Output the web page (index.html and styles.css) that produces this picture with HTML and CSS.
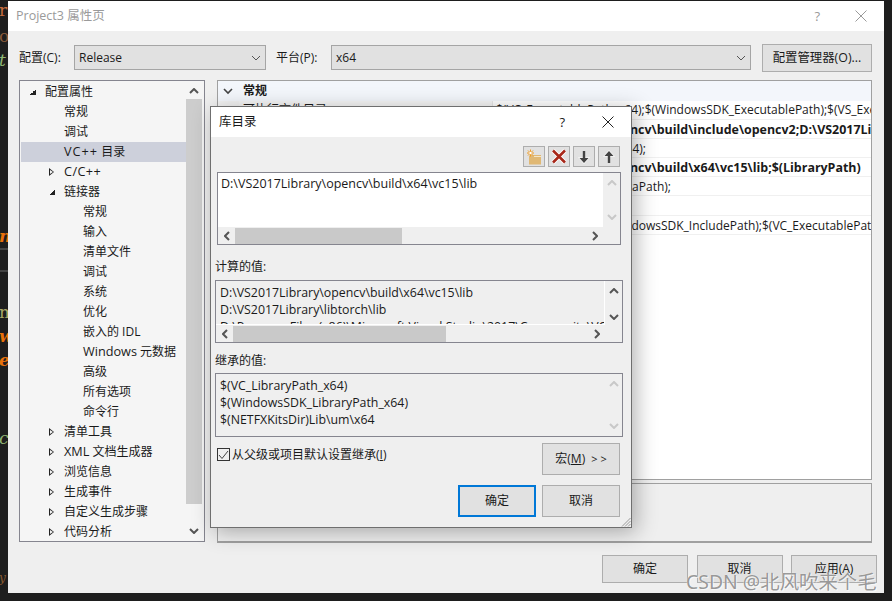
FILE: index.html
```html
<!DOCTYPE html>
<html lang="zh-CN">
<head>
<meta charset="utf-8">
<title>Project3 属性页</title>
<link rel="stylesheet" href="styles.css">
</head>
<body>
<div class="backdrop">
  <span class="bl up o" style="top:0">r</span>
  <span class="bl up o2" style="top:26px">o</span>
  <span class="bl g" style="top:50px">t</span>
  <span class="bl o3" style="top:226px">n</span>
  <span class="bl up y" style="top:302px">m</span>
  <span class="bl o3" style="top:326px">w</span>
  <span class="bl o3" style="top:350px">e</span>
  <span class="bl g" style="top:428px">c</span>
  <span class="bl small" style="top:568px">y</span>
  <i class="rule" style="top:248px"></i>
  <i class="rule" style="top:270px"></i>
</div>

<section class="win main">
  <header class="title">
    <span class="title-text dim">Project3 属性页</span>
    <span class="title-btns dim">
      <span class="help">?</span>
      <svg width="14" height="14" viewBox="0 0 14 14"><path d="M1.500 1.500l11 11M12.500 1.500l-11 11" stroke="currentColor" fill="none"/></svg>
    </span>
  </header>
  <div class="main-body">
    <div class="cfg-row">
      <span class="cfg-label">配置(C):</span>
      <div class="combo c1"><span>Release</span><svg width="10" height="6" viewBox="0 0 10 6"><path d="M1 1l4 4 4-4" stroke="#555" fill="none"/></svg></div>
      <span class="cfg-label l2">平台(P):</span>
      <div class="combo c2"><span>x64</span><svg width="10" height="6" viewBox="0 0 10 6"><path d="M1 1l4 4 4-4" stroke="#555" fill="none"/></svg></div>
      <button class="btn mgr">配置管理器(O)...</button>
    </div>
    <div class="panes">
      <div class="tree-box">
        <ul class="tree">
          <li class="lv0"><i class="tw open"></i>配置属性</li>
          <li class="lv1">常规</li>
          <li class="lv1">调试</li>
          <li class="lv1 sel"><span class="lat plus">VC++</span> 目录</li>
          <li class="lv1"><i class="tw"></i><span class="lat plus2">C/C++</span></li>
          <li class="lv1"><i class="tw open"></i>链接器</li>
          <li class="lv2">常规</li>
          <li class="lv2">输入</li>
          <li class="lv2">清单文件</li>
          <li class="lv2">调试</li>
          <li class="lv2">系统</li>
          <li class="lv2">优化</li>
          <li class="lv2">嵌入的 IDL</li>
          <li class="lv2"><span class="lat">Windows</span> 元数据</li>
          <li class="lv2">高级</li>
          <li class="lv2">所有选项</li>
          <li class="lv2">命令行</li>
          <li class="lv1"><i class="tw"></i>清单工具</li>
          <li class="lv1"><i class="tw"></i><span class="lat">XML</span> 文档生成器</li>
          <li class="lv1"><i class="tw"></i>浏览信息</li>
          <li class="lv1"><i class="tw"></i>生成事件</li>
          <li class="lv1"><i class="tw"></i>自定义生成步骤</li>
          <li class="lv1"><i class="tw"></i>代码分析</li>
        </ul>
        <div class="vbar">
          <svg class="ar" width="10" height="6" viewBox="0 0 10 6"><path d="M1 5l4-4 4 4" stroke="#555" stroke-width="2" fill="none"/></svg>
          <div class="vtrack"><div class="vthumb"></div></div>
          <svg class="ar" width="10" height="6" viewBox="0 0 10 6"><path d="M1 1l4 4 4-4" stroke="#555" stroke-width="2" fill="none"/></svg>
        </div>
      </div>
      <div class="right">
        <div class="grid">
          <div class="grid-head"><svg width="10" height="7" viewBox="0 0 10 7"><path d="M1 1l4 4 4-4" stroke="#444" stroke-width="1.600" fill="none"/></svg><b>常规</b></div>
          <div class="grid-row first-row"><span class="key">可执行文件目录</span><span class="val">$(VC_ExecutablePath_x64);$(WindowsSDK_ExecutablePath);$(VS_ExecutablePath)</span></div>
          <div class="grid-row bold"><span class="val">D:\VS2017Library\opencv\build\include\opencv2;D:\VS2017Library</span></div>
          <div class="grid-row"><span class="val">$(VC_ReferencesPath_x64);</span></div>
          <div class="grid-row bold"><span class="val">D:\VS2017Library\opencv\build\x64\vc15\lib;$(LibraryPath)</span></div>
          <div class="grid-row"><span class="val">$(WindowsSDK_MetadataPath);</span></div>
          <div class="grid-row"></div>
          <div class="grid-row"><span class="val">$(VC_IncludePath);$(WindowsSDK_IncludePath);$(VC_ExecutablePath_x64)</span></div>
        </div>
        <div class="desc"></div>
      </div>
    </div>
    <div class="foot">
      <button class="btn fb">确定</button>
      <button class="btn fb">取消</button>
      <button class="btn fb">应用(A)</button>
    </div>
  </div>
  <span class="mark">CSDN @北风吹来个毛</span>
</section>

<section class="win dlg">
  <header class="title dlg-title">
    <span class="title-text">库目录</span>
    <span class="title-btns">
      <span class="help">?</span>
      <svg width="14" height="14" viewBox="0 0 14 14"><path d="M1.500 1.500l11 11M12.500 1.500l-11 11" stroke="#222" fill="none"/></svg>
    </span>
  </header>
  <div class="dlg-body">
    <div class="tools">
      <button class="tool"><svg width="18" height="16" viewBox="0 0 18 16"><path d="M5 6h11v9.500H4V7z" fill="#e0b874"/><path d="M9 7.500h7" stroke="#f5e6c8"/><path d="M5.500 0.500v7M2 4h7M3 1.500l5 5M8 1.500l-5 5" stroke="#f09a20"/><circle cx="5.500" cy="4" r="1.200" fill="#fff"/></svg></button>
      <button class="tool"><svg width="16" height="15" viewBox="0 0 16 15"><path d="M2 1.500l12 12M14 1.500l-12 12" stroke="#fff" stroke-width="4.500"/><path d="M2 1.500l12 12M14 1.500l-12 12" stroke="#a8281a" stroke-width="2.600"/></svg></button>
      <button class="tool"><svg width="12" height="14" viewBox="0 0 12 14"><path d="M6 1v7h4.500L6 13 1.500 8H6z" fill="#444" stroke="#fff" stroke-opacity=".7" paint-order="stroke" stroke-width="1.500"/><path d="M6 1v8" stroke="#444" stroke-width="2.400"/></svg></button>
      <button class="tool"><svg width="12" height="14" viewBox="0 0 12 14"><path d="M6 13V6h4.500L6 1 1.500 6H6z" fill="#444" stroke="#fff" stroke-opacity=".7" paint-order="stroke" stroke-width="1.500"/><path d="M6 13V5" stroke="#444" stroke-width="2.400"/></svg></button>
    </div>

    <div class="list edit">
      <div class="list-main">
        <div class="list-text white">D:\VS2017Library\opencv\build\x64\vc15\lib</div>
        <div class="dvbar"><svg width="10" height="6" viewBox="0 0 10 6"><path d="M1 5l4-4 4 4" stroke="#c8c8c8" stroke-width="2" fill="none"/></svg><svg width="10" height="6" viewBox="0 0 10 6"><path d="M1 1l4 4 4-4" stroke="#c8c8c8" stroke-width="2" fill="none"/></svg></div>
      </div>
      <div class="hbar">
        <span class="harr"><svg width="6" height="10" viewBox="0 0 6 10"><path d="M5 1L1 5l4 4" stroke="#555" stroke-width="2" fill="none"/></svg></span>
        <div class="htrack"><div class="hthumb t1"></div></div>
        <span class="harr"><svg width="6" height="10" viewBox="0 0 6 10"><path d="M1 1l4 4-4 4" stroke="#555" stroke-width="2" fill="none"/></svg></span>
      </div>
    </div>

    <div class="sec-label first">计算的值:</div>
    <div class="list wide">
      <div class="list-main h48">
        <div class="list-text clip">D:\VS2017Library\opencv\build\x64\vc15\lib<br>D:\VS2017Library\libtorch\lib<br>D:\Program Files (x86)\Microsoft Visual Studio\2017\Community\VC\lib</div>
        <div class="dvbar"><svg width="10" height="6" viewBox="0 0 10 6"><path d="M1 5l4-4 4 4" stroke="#555" stroke-width="2" fill="none"/></svg><svg width="10" height="6" viewBox="0 0 10 6"><path d="M1 1l4 4 4-4" stroke="#555" stroke-width="2" fill="none"/></svg></div>
      </div>
      <div class="hbar">
        <span class="harr"><svg width="6" height="10" viewBox="0 0 6 10"><path d="M5 1L1 5l4 4" stroke="#555" stroke-width="2" fill="none"/></svg></span>
        <div class="htrack"><div class="hthumb t2"></div></div>
        <span class="harr"><svg width="6" height="10" viewBox="0 0 6 10"><path d="M1 1l4 4-4 4" stroke="#555" stroke-width="2" fill="none"/></svg></span>
      </div>
    </div>

    <div class="sec-label">继承的值:</div>
    <div class="list wide">
      <div class="list-main h63">
        <div class="list-text">$(VC_LibraryPath_x64)<br>$(WindowsSDK_LibraryPath_x64)<br>$(NETFXKitsDir)Lib\um\x64</div>
        <div class="dvbar"><svg width="10" height="6" viewBox="0 0 10 6"><path d="M1 5l4-4 4 4" stroke="#c8c8c8" stroke-width="2" fill="none"/></svg><svg width="10" height="6" viewBox="0 0 10 6"><path d="M1 1l4 4 4-4" stroke="#c8c8c8" stroke-width="2" fill="none"/></svg></div>
      </div>
    </div>

    <div class="bottom">
      <label class="check">
        <span class="box"><svg width="11" height="10" viewBox="0 0 11 10"><path d="M1 5l3 3.500L10 1" stroke="#444" fill="none"/></svg></span>
        <span>从父级或项目默认设置继承(<u>I</u>)</span>
      </label>
      <button class="btn dbtn macro">宏(<u>M</u>) <span class="gt">&gt; &gt;</span></button>
    </div>
    <div class="dlg-actions">
      <button class="btn dbtn primary">确定</button>
      <button class="btn dbtn">取消</button>
    </div>
  </div>
  <svg class="grip" width="10" height="10" viewBox="0 0 10 10"><path d="M9.500 1L1 9.500M9.500 4L4 9.500M9.500 7L7 9.500" stroke="#999" fill="none"/></svg>
</section>
</body>
</html>
```
FILE: styles.css
```css
* { box-sizing: border-box; }
html, body { margin: 0; height: 100%; }
body {
  width: 892px; height: 601px; overflow: hidden; position: relative;
  background: #1e1e1e;
  font: 12px/20px "Open Sans", "Noto Sans CJK SC", sans-serif;
  color: #1a1a1a;
}
ul { list-style: none; margin: 0; padding: 0; }
button { font: inherit; color: inherit; padding: 0; margin: 0; }
.lat { font-size: 12.700px; line-height: 0; }
.plus { letter-spacing: 1px; }
.plus2 { letter-spacing: .4px; }

.backdrop { position: absolute; inset: 0; }
.bl { position: absolute; left: -1px; font: italic 17px/20px "DejaVu Serif", serif; }
.up { font-style: normal; }
.o { color: #c76d3e; } .o2 { color: #8a5a3a; } .o3 { color: #e8710a; font-weight: 700; } .g { color: #8fb573; } .y { color: #a8a868; }
.small { font-size: 12px; color: #8a5a30; }
.rule { position: absolute; left: 0; width: 8px; height: 2px; background: #444; }

.win { position: absolute; background: #efefef; display: flex; flex-direction: column; }
.main { left: 8px; top: 1px; width: 876px; height: 592px; }
.dlg { left: 210px; top: 106px; width: 422px; height: 422px; border: 1px solid #6f6f6f; box-shadow: 4px 4px 20px rgba(0,0,0,.3); }

.title { height: 30px; flex: none; background: #fff; display: flex; align-items: center; justify-content: space-between; }
.title-text { padding-left: 8px; font-size: 12.500px; }
.dim { color: #9a9a9a; }
.title-btns { display: flex; align-items: center; gap: 34px; padding-right: 16px; }
.help { font-size: 13px; }

.main-body { flex: 1; display: flex; flex-direction: column; padding: 13px 7px 0 11px; min-height: 0; }
.cfg-row { display: flex; align-items: center; height: 28px; flex: none; margin-right: -5px; }
.cfg-label { width: 55px; flex: none; }
.l2 { margin-left: 10px; }
.combo { height: 25px; margin-bottom: 1px; background: #e1e1e1; border: 1px solid #a5a5a5; display: flex; align-items: center; justify-content: space-between; padding: 0 4px 0 4px; }
.c1 { width: 192px; }
.c2 { width: 420px; }
.btn { background: #e1e1e1; border: 1px solid #adadad; text-align: center; }
.mgr { width: 110px; height: 28px; margin-left: 11px; font-size: 12.400px; }

.panes { display: flex; gap: 12px; margin-top: 8px; margin-right: 5px; align-items: flex-start; }
.tree-box { width: 186px; height: 462px; background: #f5f5f5; border: 1px solid #85858f; display: flex; padding: 1px; flex: none; }
.tree { flex: 1; min-width: 0; }
.tree li { height: 20px; position: relative; white-space: nowrap; }
.lv0 { padding-left: 24px; }
.lv1 { padding-left: 43px; }
.lv2 { padding-left: 62px; }
.sel { background: #cdd0db; }
.tw { position: absolute; top: 6px; width: 0; height: 0; border-top: 4px solid transparent; border-bottom: 4px solid transparent; border-left: 5px solid #222; }
.lv0 .tw { left: 9px; }
.lv1 .tw { left: 28px; }
.tw:not(.open)::after { content: ""; position: absolute; left: -4px; top: -2.500px; border-top: 2.500px solid transparent; border-bottom: 2.500px solid transparent; border-left: 3px solid #f5f5f5; }
.tw.open { top: 7px; border: 0; width: 6px; height: 6px; background: linear-gradient(135deg, transparent 50%, #222 50%); }
.vbar { width: 16px; margin-right: 1px; flex: none; display: flex; flex-direction: column; align-items: center; padding: 6px 0 6px; }
.vtrack { flex: 1; width: 16px; margin: 5px 0 24px; }
.vthumb { height: 100%; background: #cdcdcd; }
.ar { flex: none; }

.right { flex: 1; min-width: 0; display: flex; flex-direction: column; gap: 3px; }
.grid { height: 400px; background: #fff; border: 1px solid #a0a0a0; overflow: hidden; }
.grid-head { height: 20px; background: #f3f6fb; display: flex; align-items: center; gap: 10px; padding-left: 5px; }
.grid-row { height: 19.100px; border-bottom: 1px solid #f0f0f0; position: relative; white-space: nowrap; }
.first-row { background: linear-gradient(90deg, #f3f3f3 21px, #f6f6f6 21px, #f6f6f6 274px, #e8e8e8 274px, #e8e8e8 275px, #fff 275px); }
.bold { font-weight: 700; font-size: 12.450px; }
.key { position: absolute; left: 25px; top: -1px; }
.val { position: absolute; left: 278px; top: 0; }
.first-row .val { top: -1px; }
.desc { height: 60px; background: #efefef; border: 1px solid #a0a0a0; border-bottom-width: 2px; }

.foot { display: flex; justify-content: flex-end; gap: 8.500px; margin-top: 12px; }
.fb { width: 86px; height: 28px; }

.mark { position: absolute; left: 678px; top: 569px; font: 19.400px/24px "Noto Sans", "Noto Sans CJK SC", sans-serif; color: rgba(125,125,125,.8); text-shadow: 0 0 1px #fff, 1px 1px 0 rgba(255,255,255,.6); white-space: nowrap; }

.dlg-title .title-text { padding-left: 8px; }
.dlg-title .title-btns { gap: 36px; padding-right: 16px; }
.dlg-body { flex: 1; padding: 9px 11px 0 5px; display: flex; flex-direction: column; min-height: 0; }
.tools { display: flex; justify-content: flex-end; gap: 3px; height: 21px; flex: none; }
.tool { width: 22px; height: 21px; background: #e1e1e1; border: 1px solid #adadad; display: flex; align-items: center; justify-content: center; }
.list { border: 1px solid #85858f; flex: none; }
.edit { margin: 5px 0 0 1px; height: 73px; width: 404px; }
.wide { width: 408px; margin-left: -1px; }
.list-main { display: flex; height: 54px; }
.h48 { height: 44px; }
.h63 { height: 62px; }
.list-text { flex: 1; min-width: 0; padding: 3px 4px 0; line-height: 17px; font-size: 12.350px; white-space: nowrap; overflow: hidden; }
.white { background: #fff; }
.edit .list-text { padding: 2px 3px; font-size: 12.500px; }
.clip { border-right: 1px solid #fff; border-bottom: 1px solid #fff; }
.dvbar { width: 17px; flex: none; display: flex; flex-direction: column; align-items: center; justify-content: space-between; padding: 7px 0; }
.h48 .dvbar { padding-bottom: 5px; }
.hbar { height: 17px; display: flex; align-items: center; padding-right: 17px; }
.harr { width: 17px; height: 17px; flex: none; display: flex; align-items: center; justify-content: center; }
.htrack { flex: 1; height: 16px; }
.hthumb { height: 16px; background: #c9c9c9; }
.t1 { width: 167px; }
.t2 { width: 213px; }
.sec-label { height: 20px; margin-left: -1px; flex: none; line-height: 20px; }
.sec-label.first { margin-top: 12px; margin-bottom: 3px; }
.sec-label:not(.first) { margin-top: 8px; margin-bottom: 2px; }
.bottom { display: flex; justify-content: space-between; margin-top: 6px; height: 32px; flex: none; }
.check { display: flex; align-items: flex-start; gap: 2px; line-height: 14px; margin-top: 5px; margin-left: 1px; }
.box { width: 13px; height: 13px; border: 1px solid #333; display: flex; align-items: center; justify-content: center; }
.dbtn { width: 78px; height: 32px; }
.gt { font-size: 11px; margin-left: 3px; }
.dlg-actions { display: flex; justify-content: flex-end; gap: 6px; margin-top: 10px; flex: none; }
.primary { border: 2px solid #0078d7; }
.grip { position: absolute; right: 0; bottom: 0; }
```
